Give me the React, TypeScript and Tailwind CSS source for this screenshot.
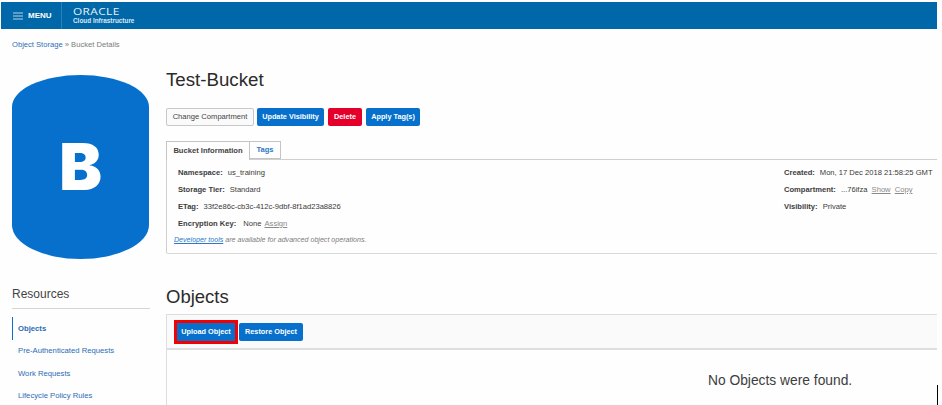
const sideLinks = ['Pre-Authenticated Requests', 'Work Requests', 'Lifecycle Policy Rules'];

function Label({ children }: { children: React.ReactNode }) {
  return <span className="font-bold text-[#3d3d3d] mr-[5px]">{children}</span>;
}

export default function App() {
  return (
    <div className="w-[942px] h-[405px] overflow-hidden bg-[#fefefe] relative font-['Liberation_Sans',Arial,sans-serif] text-[#3a3a3a]">
      <div className="h-[2px]" />
      {/* top bar */}
      <header className="ml-[1px] w-[936px] h-[27px] bg-[#0067a8] flex items-center text-white">
        <div className="w-[61px] h-full flex items-center pl-[12px] gap-[5px] border-r border-[#2a80b8]">
          <svg width="10" height="8" viewBox="0 0 10 8" stroke="#b9d5e8" strokeWidth="1"><path d="M0 1h10M0 4h10M0 7h10" /></svg>
          <span className="text-[8px] font-bold">MENU</span>
        </div>
        <div className="pl-[11px] pt-[1px] flex flex-col justify-center">
          <span className="text-[9.5px] leading-[9px] tracking-[0.3px] font-['Open_Sans',sans-serif] text-[#e8f1f7] scale-x-[1.25] origin-left">ORACLE</span>
          <span className="text-[6.4px] leading-[10px] font-bold text-[#d8e8f2]">Cloud Infrastructure</span>
        </div>
      </header>

      <div className="pl-[12px] pt-[10px] text-[7.6px] leading-[11px] text-[#7a7a7a]">
        <span className="text-[#2f6fb5]">Object Storage</span> » Bucket Details
      </div>

      <div className="flex pl-[12px] pt-[25px]">
        {/* left column */}
        <aside className="w-[138px] shrink-0">
          <div className="relative w-[137px] h-[184px] flex items-center justify-center">
            <svg width="137" height="184" viewBox="0 0 137 184" className="absolute inset-0">
              <path d="M0 32A68.5 32 0 0 1 137 32V150A68.5 34 0 0 1 0 150Z" fill="#0670cc" />
            </svg>
            <span className="relative text-[64px] leading-none font-black text-white font-['Inter',sans-serif]">B</span>
          </div>
          <div className="mt-[27px] text-[12px] leading-[16px] text-[#444]">Resources</div>
          <div className="mt-[6px] h-[1px] bg-[#d4d4d4]" />
          <nav className="mt-[8px] text-[7.7px] text-[#2a6cb5]">
            <div className="h-[23px] flex items-center pl-[5px] border-l-[1.5px] border-[#0670cc] font-bold">Objects</div>
            {sideLinks.map((l) => (
              <div key={l} className="h-[22.3px] flex items-center pl-[6px]">{l}</div>
            ))}
          </nav>
        </aside>

        {/* main column */}
        <main className="ml-[16px] w-[771px] -mt-[7px]">
          <h1 className="text-[18.7px] leading-[24px] text-[#2b2b2b]">Test-Bucket</h1>
          <div className="mt-[16px] flex text-[7.3px] leading-none">
            <button className="h-[18px] w-[88px] rounded-[2px] bg-[#fafafa] border border-[#c8c8c8] text-[#444] text-[7.6px]">Change Compartment</button>
            <button className="ml-[3px] h-[18px] w-[67px] rounded-[2px] bg-[#0670cc] text-white font-bold">Update Visibility</button>
            <button className="ml-[4px] h-[18px] w-[34px] rounded-[2px] bg-[#e4002b] text-white font-bold">Delete</button>
            <button className="ml-[4px] h-[18px] w-[54px] rounded-[2px] bg-[#0670cc] text-white font-bold">Apply Tag(s)</button>
          </div>

          <div className="mt-[15px] flex text-[7.6px] leading-none relative z-10">
            <div className="h-[19px] w-[84px] flex items-center justify-center bg-[#fefefe] border border-b-0 border-[#c4c4c4] font-bold text-[#444]">Bucket Information</div>
            <div className="h-[18px] w-[31px] flex items-center justify-center bg-[#fefefe] border border-l-0 border-[#c4c4c4] font-bold text-[#2a7ac8]">Tags</div>
          </div>
          <section className="-mt-[1px] h-[95px] rounded-bl-[2px] border border-r-0 border-[#cfcfcf] border-b-[#d8d8d8] flex justify-between text-[7.6px] leading-[17px]">
            <div className="pl-[11px] pt-[4px]">
              <div><Label>Namespace:</Label>us_training</div>
              <div><Label>Storage Tier:</Label>Standard</div>
              <div><Label>ETag:</Label>33f2e86c-cb3c-412c-9dbf-8f1ad23a8826</div>
              <div><Label>Encryption Key:</Label><span className="ml-[2px]">None</span> <span className="underline text-[#8a8a8a] ml-[1px]">Assign</span></div>
              <div className="-ml-[4px] text-[7.1px] italic text-[#7d7d7d]"><span className="underline text-[#2a7ac8]">Developer tools</span> are available for advanced object operations.</div>
            </div>
            <div className="w-[153px] pt-[4px] whitespace-nowrap">
              <div><Label>Created:</Label>Mon, 17 Dec 2018 21:58:25 GMT</div>
              <div><Label>Compartment:</Label>...76ifza <span className="underline text-[#8a8a8a] ml-[2px]">Show</span> <span className="underline text-[#8a8a8a] ml-[2px]">Copy</span></div>
              <div><Label>Visibility:</Label>Private</div>
            </div>
          </section>

          <h2 className="mt-[31px] text-[18.5px] leading-[24px] text-[#2b2b2b]">Objects</h2>
          <div className="mt-[5px] h-[36px] border border-r-0 border-[#dedede] border-b-2 bg-[#fafafa] flex items-center pl-[7px] gap-[1px]">
            <div className="h-[24px] border-[3px] border-[#f50000] flex">
              <button className="w-[58px] bg-[#0670cc] text-white font-bold text-[7.3px] leading-none">Upload Object</button>
            </div>
            <button className="h-[18px] w-[64px] rounded-[2px] bg-[#0670cc] text-white font-bold text-[7.3px] leading-none">Restore Object</button>
          </div>
          <div className="border-l border-[#dedede] h-[60px] pt-[22px] pl-[541px] text-[13.8px] leading-[17px] text-[#3d3d3d]">No Objects were found.</div>
        </main>
      </div>
      {/* stray cursor line */}
      <div className="absolute left-[937px] top-[385px] w-[1px] h-[20px] bg-black" />
    </div>
  );
}
